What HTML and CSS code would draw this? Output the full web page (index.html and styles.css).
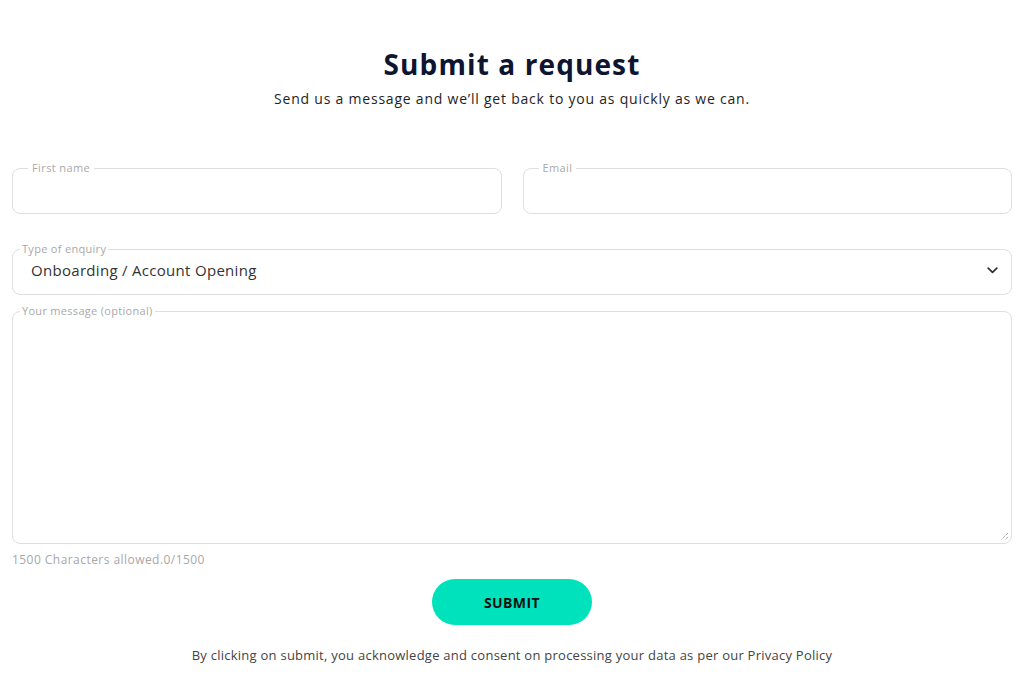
FILE: index.html
```html
<!DOCTYPE html>
<html lang="en">
<head>
<meta charset="utf-8">
<title>Submit a request</title>
<link rel="stylesheet" href="styles.css">
</head>
<body>
<main class="page">
  <header class="intro">
    <h1 class="title">Submit a request</h1>
    <p class="subtitle">Send us a message and we’ll get back to you as quickly as we can.</p>
  </header>
  <form class="form">
    <div class="row">
      <fieldset class="field field-text">
        <legend class="label label-wide">First name</legend>
        <div class="input"></div>
      </fieldset>
      <fieldset class="field field-text">
        <legend class="label label-wide">Email</legend>
        <div class="input"></div>
      </fieldset>
    </div>
    <fieldset class="field field-select">
      <legend class="label">Type of enquiry</legend>
      <div class="select">
        <span class="select-value">Onboarding / Account Opening</span>
        <svg class="chevron" width="11" height="7" viewBox="0 0 11 7"><path d="M1.2 1.2 L5.5 5.3 L9.8 1.2" fill="none" stroke="#2b2f3a" stroke-width="1.7" stroke-linecap="round" stroke-linejoin="round"/></svg>
      </div>
    </fieldset>
    <fieldset class="field field-area">
      <legend class="label">Your message (optional)</legend>
      <div class="area">
        <svg class="grip" width="10" height="10" viewBox="0 0 10 10"><path d="M9 2 L2 9 M9 6 L6 9" stroke="#8a8a8a" stroke-width="1" stroke-dasharray="1 1"/></svg>
      </div>
    </fieldset>
    <p class="count">1500 Characters allowed.0/1500</p>
    <div class="actions">
      <button type="button" class="submit">SUBMIT</button>
    </div>
    <p class="consent">By clicking on submit, you acknowledge and consent on processing your data as per our Privacy Policy</p>
  </form>
</main>
</body>
</html>
```

FILE: styles.css
```css
* { box-sizing: border-box; }
html, body { margin: 0; padding: 0; background: #fff; }
body {
  font-family: "Open Sans", "Liberation Sans", sans-serif;
  color: #222;
}
.page {
  width: 1000px;
  margin: 0 auto;
}
.intro { text-align: center; padding-top: 46px; }
.title {
  margin: 0;
  font-size: 28px;
  line-height: 36px;
  font-weight: 700;
  color: #0d1531;
  letter-spacing: 1.1px;
}
.subtitle {
  margin: 7px 0 0;
  font-size: 14px;
  line-height: 20px;
  color: #1e1e1e;
  letter-spacing: 0.78px;
}
.form { margin-top: 52px; }
.row {
  display: grid;
  grid-template-columns: 1fr 1fr;
  column-gap: 21px;
}
.field {
  margin: 0;
  padding: 0;
  min-width: 0;
  border: 1px solid #dedede;
  border-radius: 8px;
}
.label {
  margin-left: 7px;
  padding: 0 2px;
  font-size: 11px;
  line-height: 14px;
  color: #a9a9a9;
  letter-spacing: 0.3px;
}
.label-wide { margin-left: 15px; padding: 0 4px; letter-spacing: 0.4px; }
.input { height: 38px; }
.field-select { margin-top: 28px; }
.select {
  height: 38px;
  padding: 5px 13px 15px 18px;
  display: flex;
  align-items: center;
  justify-content: space-between;
}
.select-value {
  font-size: 15px;
  line-height: 18px;
  color: #333;
  letter-spacing: 0.3px;
}
.chevron { margin-top: 1px; }
.field-area { margin-top: 9px; }
.area {
  height: 225px;
  display: flex;
  justify-content: flex-end;
  align-items: flex-end;
  padding: 0 2px 2px 0;
}
.count {
  margin: 8px 0 0;
  font-size: 12px;
  line-height: 16px;
  color: #a8a8a8;
  letter-spacing: 0.45px;
}
.actions {
  display: flex;
  justify-content: center;
  margin-top: 11px;
}
.submit {
  width: 160px;
  height: 46px;
  border: 0;
  border-radius: 23px;
  background: #00e2bb;
  color: #111;
  font-family: inherit;
  font-size: 14px;
  font-weight: 700;
  letter-spacing: 0.4px;
}
.consent {
  margin: 21px 0 0;
  text-align: center;
  font-size: 13px;
  line-height: 18px;
  color: #444;
  letter-spacing: 0.25px;
}
```
